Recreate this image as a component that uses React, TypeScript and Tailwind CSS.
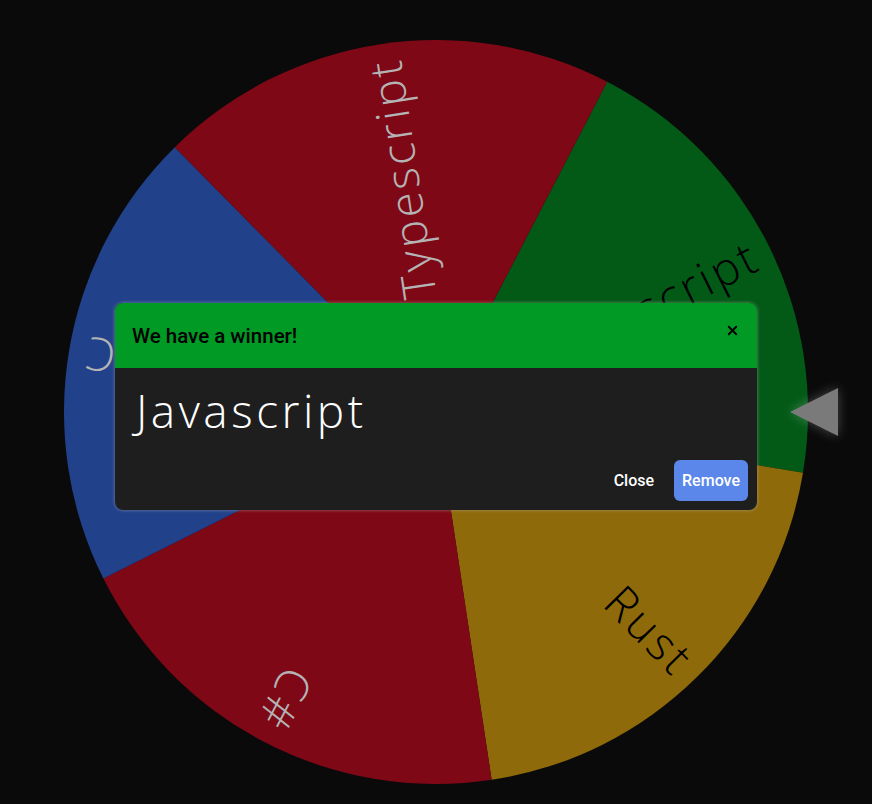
import { X } from "lucide-react";

type Slice = { label: string; color: string; text: string };

const slices: Slice[] = [
  { label: "Javascript", color: "#025a16", text: "#000000" },
  { label: "Rust", color: "#8f6a0a", text: "#000000" },
  { label: "C#", color: "#7f0816", text: "#b4b4b4" },
  { label: "C", color: "#21418a", text: "#b4b4b4" },
  { label: "Typescript", color: "#7f0816", text: "#b4b4b4" },
];

const R = 372;
const START = -62.6;

function point(deg: number, r: number) {
  const a = (deg * Math.PI) / 180;
  return [R + r * Math.cos(a), R + r * Math.sin(a)];
}

function Wheel() {
  const step = 360 / slices.length;
  return (
    <svg width={744} height={744} viewBox="0 0 744 744" className="block">
      {slices.map((s, i) => {
        const a0 = START + i * step;
        const a1 = a0 + step;
        const [x0, y0] = point(a0, R);
        const [x1, y1] = point(a1, R);
        return (
          <path
            key={i}
            d={`M${R} ${R} L${x0} ${y0} A${R} ${R} 0 0 1 ${x1} ${y1} Z`}
            fill={s.color}
          />
        );
      })}
      {slices.map((s, i) => {
        const mid = START + i * step + step / 2;
        return (
          <text
            key={i}
            x={R + 357}
            y={R}
            transform={`rotate(${mid} ${R} ${R})`}
            textAnchor="end"
            dominantBaseline="central"
            fill={s.text}
            fontSize={46}
            fontWeight={300}
            letterSpacing={3}
            style={{ fontFamily: "'Open Sans', sans-serif" }}
          >
            {s.label}
          </text>
        );
      })}
    </svg>
  );
}

export default function App() {
  return (
    <div className="relative min-h-[804px] w-full bg-[#0a0a0a] overflow-hidden">
      {/* wheel */}
      <div className="flex justify-center pt-10">
        <div className="relative">
          <Wheel />
          {/* pointer */}
          <svg
            width={60}
            height={60}
            viewBox="0 0 60 60"
            className="absolute left-[718px] top-[342px] drop-shadow-[0_0_6px_rgba(255,255,255,0.25)]"
          >
            <polygon points="8,30 56,6 56,54" fill="#7a7a7a" />
          </svg>
        </div>
      </div>

      {/* modal */}
      <div className="absolute inset-0 flex justify-center pt-[303px]">
        <div className="w-[642px] h-[207px] rounded-lg overflow-hidden bg-[#1e1e1e] shadow-[0_0_3px_1px_rgba(180,180,180,0.35)] flex flex-col">
          <div className="h-[65px] bg-[#009a24] flex items-center justify-between pl-[17px] pr-[17px]">
            <span className="text-[20.5px] font-medium text-black font-['Roboto',sans-serif] pt-[1px]">
              We have a winner!
            </span>
            <X size={15} strokeWidth={3} className="text-black -mt-[10px]" />
          </div>
          <div className="flex-1 flex flex-col px-[21px]">
            <div className="pt-[12px] text-[46px] leading-[60px] font-light tracking-[3.5px] text-white font-['Open_Sans',sans-serif]">
              Javascript
            </div>
            <div className="mt-auto mb-[9px] flex justify-end items-center gap-[20px] -mr-[12px]">
              <button className="text-white text-[16px] font-medium font-['Roboto',sans-serif]">
                Close
              </button>
              <button className="h-[41px] px-[8px] rounded-md bg-[#5b87ea] text-white text-[16px] font-medium font-['Roboto',sans-serif]">
                Remove
              </button>
            </div>
          </div>
        </div>
      </div>
    </div>
  );
}
